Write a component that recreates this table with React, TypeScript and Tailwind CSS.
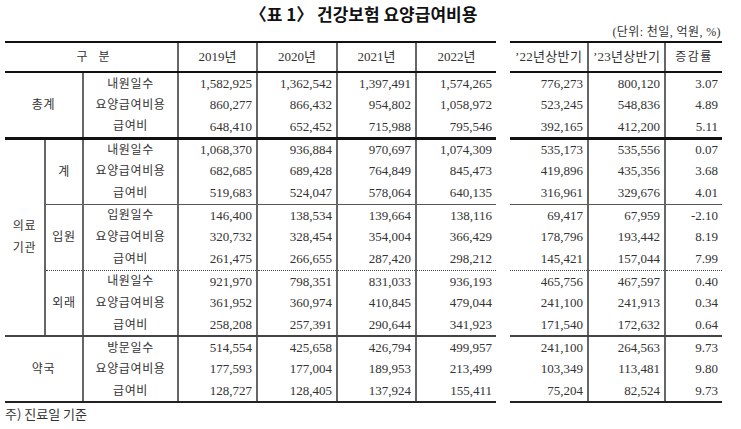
import React from "react";

// 표 데이터: [항목, 2019, 2020, 2021, 2022, '22상반기, '23상반기, 증감률]
type Row = [string, string, string, string, string, string, string, string];

interface Group {
  cat?: string; // 총계 / 약국 (2칸 병합)
  sub?: string; // 의료기관 하위 구분
  rows: Row[];
  bottom: string;
}

const groups: Group[] = [
  {
    cat: "총계",
    bottom: "border-b-[3px] border-b-[#111]",
    rows: [
      ["내원일수", "1,582,925", "1,362,542", "1,397,491", "1,574,265", "776,273", "800,120", "3.07"],
      ["요양급여비용", "860,277", "866,432", "954,802", "1,058,972", "523,245", "548,836", "4.89"],
      ["급여비", "648,410", "652,452", "715,988", "795,546", "392,165", "412,200", "5.11"],
    ],
  },
  {
    sub: "계",
    bottom: "border-b border-b-[#555]",
    rows: [
      ["내원일수", "1,068,370", "936,884", "970,697", "1,074,309", "535,173", "535,556", "0.07"],
      ["요양급여비용", "682,685", "689,428", "764,849", "845,473", "419,896", "435,356", "3.68"],
      ["급여비", "519,683", "524,047", "578,064", "640,135", "316,961", "329,676", "4.01"],
    ],
  },
  {
    sub: "입원",
    bottom: "border-b border-b-[#444] [border-bottom-style:dotted]",
    rows: [
      ["입원일수", "146,400", "138,534", "139,664", "138,116", "69,417", "67,959", "-2.10"],
      ["요양급여비용", "320,732", "328,454", "354,004", "366,429", "178,796", "193,442", "8.19"],
      ["급여비", "261,475", "266,655", "287,420", "298,212", "145,421", "157,044", "7.99"],
    ],
  },
  {
    sub: "외래",
    bottom: "border-b-2 border-b-[#444]",
    rows: [
      ["내원일수", "921,970", "798,351", "831,033", "936,193", "465,756", "467,597", "0.40"],
      ["요양급여비용", "361,952", "360,974", "410,845", "479,044", "241,100", "241,913", "0.34"],
      ["급여비", "258,208", "257,391", "290,644", "341,923", "171,540", "172,632", "0.64"],
    ],
  },
  {
    cat: "약국",
    bottom: "border-b-2 border-b-[#222]",
    rows: [
      ["방문일수", "514,554", "425,658", "426,794", "499,957", "241,100", "264,563", "9.73"],
      ["요양급여비용", "177,593", "177,004", "189,953", "213,499", "103,349", "113,481", "9.80"],
      ["급여비", "128,727", "128,405", "137,924", "155,411", "75,204", "82,524", "9.73"],
    ],
  },
];

const V = "border-l-2 border-l-[#666]";
const NUM = "h-[22px] p-0 pr-[4px] text-right align-middle";
const LABEL = "text-[12px] tracking-[0.6px]";

export default function App() {
  return (
    <div className="w-[741px] h-[429px] bg-white text-[#333] overflow-hidden font-['Liberation_Serif','Noto_Sans_CJK_KR',serif]">
      <div className="w-[717px] ml-[5px]">
        {/* 제목 */}
        <h1 className="pt-[3px] text-center text-[17px] leading-[22px] font-bold text-[#111] font-['Noto_Sans_CJK_KR',sans-serif]">
          〈표 1〉 건강보험 요양급여비용
        </h1>
        <p className="text-right text-[12px] leading-[14px] tracking-[0.4px] pr-[1px]">(단위: 천일, 억원, %)</p>

        <div className="mt-[2px] flex gap-[14px] text-[13px]">
          {/* 연도별 */}
          <table className="w-[491px] border-collapse table-fixed">
            <colgroup>
              <col className="w-[40px]" />
              <col className="w-[38px]" />
              <col className="w-[95px]" />
              <col className="w-[79px]" />
              <col className="w-[80px]" />
              <col className="w-[79px]" />
              <col className="w-[80px]" />
            </colgroup>
            <thead>
              <tr className="h-[30px]">
                <th colSpan={3} className={`font-normal border-t-2 border-b-2 border-[#111] ${LABEL} tracking-[4px] pl-[8px]`}>
                  구 분
                </th>
                {["2019년", "2020년", "2021년", "2022년"].map((y) => (
                  <th key={y} className={`font-normal border-t-2 border-b-2 border-[#111] ${V}`}>
                    {y}
                  </th>
                ))}
              </tr>
            </thead>
            <tbody>
              {groups.map((g, gi) =>
                g.rows.map((r, ri) => {
                  const last = ri === g.rows.length - 1;
                  const b = last ? g.bottom : "";
                  return (
                    <tr key={`${gi}-${ri}`}>
                      {ri === 0 && g.cat && (
                        <td rowSpan={3} colSpan={2} className={`text-center ${LABEL} ${g.bottom}`}>
                          {g.cat}
                        </td>
                      )}
                      {ri === 0 && gi === 1 && (
                        <td rowSpan={9} className={`text-center leading-[22px] ${LABEL} ${groups[3].bottom}`}>
                          의료
                          <br />
                          기관
                        </td>
                      )}
                      {ri === 0 && g.sub && (
                        <td rowSpan={3} className={`text-center ${LABEL} ${V} ${g.bottom}`}>
                          {g.sub}
                        </td>
                      )}
                      <td className={`text-center ${LABEL} ${V} ${b}`}>{r[0]}</td>
                      {r.slice(1, 5).map((n, i) => (
                        <td key={i} className={`${NUM} ${V} ${b}`}>
                          {n}
                        </td>
                      ))}
                    </tr>
                  );
                })
              )}
            </tbody>
          </table>

          {/* 상반기 비교 */}
          <table className="w-[212px] border-collapse table-fixed">
            <colgroup>
              <col className="w-[78px]" />
              <col className="w-[77px]" />
              <col className="w-[57px]" />
            </colgroup>
            <thead>
              <tr className="h-[30px]">
                <th className="font-normal border-t-2 border-b-2 border-[#111] tracking-[0.3px]">’22년상반기</th>
                <th className={`font-normal border-t-2 border-b-2 border-[#111] tracking-[0.3px] ${V}`}>’23년상반기</th>
                <th className={`font-normal border-t-2 border-b-2 border-[#111] ${LABEL} tracking-[1.5px] ${V}`}>증감률</th>
              </tr>
            </thead>
            <tbody>
              {groups.map((g, gi) =>
                g.rows.map((r, ri) => {
                  const b = ri === g.rows.length - 1 ? g.bottom : "";
                  return (
                    <tr key={`${gi}-${ri}`}>
                      <td className={`${NUM} pr-[2px] ${b}`}>{r[5]}</td>
                      <td className={`${NUM} pr-[2px] ${V} ${b}`}>{r[6]}</td>
                      <td className={`${NUM} pr-[3px] ${V} ${b}`}>{r[7]}</td>
                    </tr>
                  );
                })
              )}
            </tbody>
          </table>
        </div>

        <p className="mt-[2px] text-[13px] leading-[18px] font-['Noto_Sans_CJK_KR',sans-serif]">주) 진료일 기준</p>
      </div>
    </div>
  );
}
